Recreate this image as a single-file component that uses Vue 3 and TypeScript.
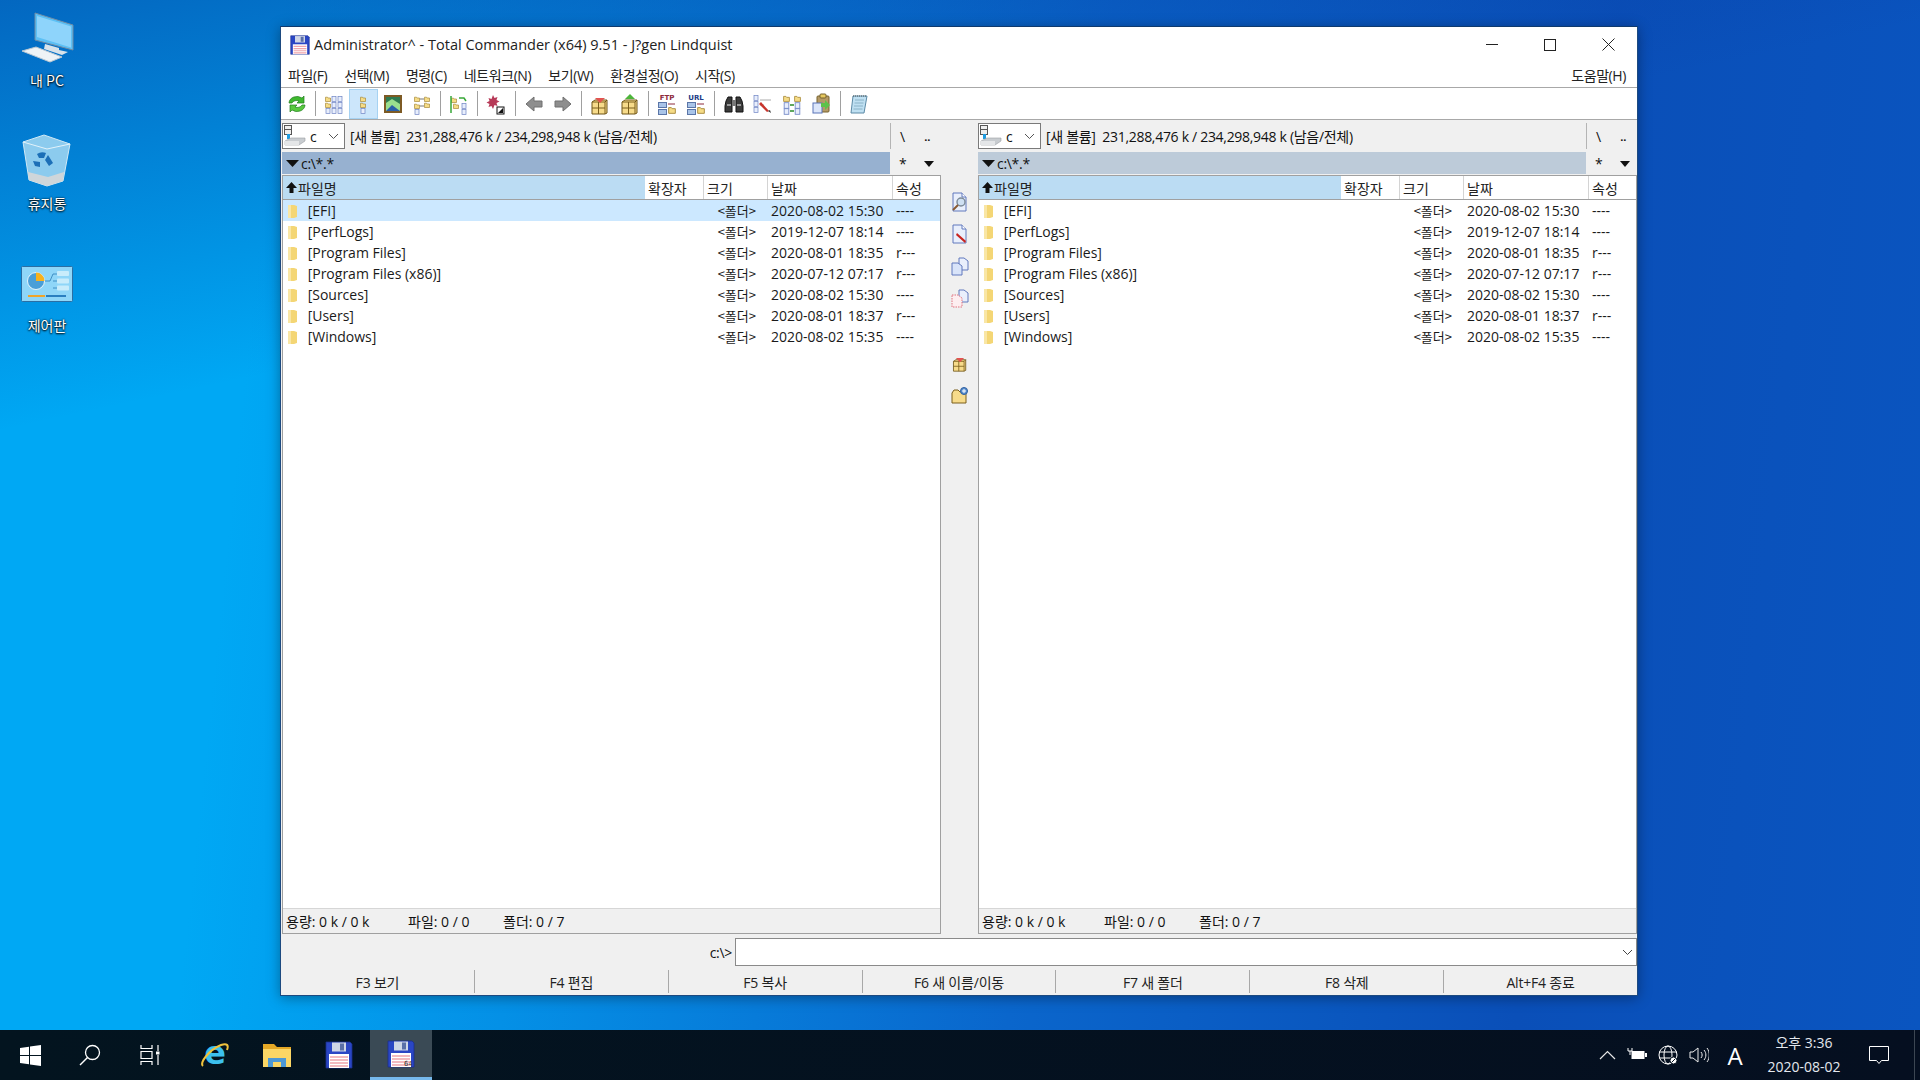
<template>
  <div class="screen">
    <!-- shared icon sprites -->
    <svg class="sprites" xmlns="http://www.w3.org/2000/svg">
      <defs>
        <symbol id="tf" viewBox="0 0 6 6"><path d="M.5 1.2h2l.6.8h2.4v3.5H.5z" fill="#f6dc86" stroke="#a8893a" stroke-width=".7"/></symbol>
        <symbol id="tb" viewBox="0 0 6 6"><rect x="1" y=".6" width="4" height="4.8" fill="#e8eefc" stroke="#6d83c4" stroke-width=".7"/></symbol>
        <symbol id="floppy" viewBox="0 0 28 28">
          <path d="M1 1h24l2 2v24H1z" fill="#2a46c4" stroke="#1b2f8c" stroke-width=".8"/>
          <rect x="7" y="1.5" width="14" height="9" fill="#cfd6e6"/><rect x="15" y="2.5" width="4" height="7" fill="#5a6fa8"/>
          <rect x="4" y="13" width="20" height="14" fill="#fff"/>
          <path d="M5 16h18M5 19h18M5 22h18M5 25h18" stroke="#f0a4ac" stroke-width="1.6"/>
        </symbol>
        <symbol id="box" viewBox="0 0 22 22">
          <path d="M3 8l3-2h12v13l-2 1H3z" fill="#f7db8a" stroke="#6e5418"/>
          <path d="M16 8v12M3 8h13M3 14h13M9.500 8v12" stroke="#7b5e1c" fill="none"/><path d="M16 8l2-2" stroke="#6e5418"/>
        </symbol>
        <symbol id="page" viewBox="0 0 18 20"><path d="M2 1h9l4 4v14H2z" fill="#e9effc" stroke="#6179bd"/><path d="M11 1v4h4" fill="#fff" stroke="#6179bd"/></symbol>
      </defs>
    </svg>

    <div class="desktop">
      <div class="desk-icons">
        <div class="desk-icon">
          <svg width="60" height="60" viewBox="17 8 60 60">
            <path d="M35 13l38 12v25L35 40z" fill="#5cc0f5" stroke="#6f8ca6"/>
            <path d="M37 16l34 10.500v21L37 37z" fill="#8ed4fb"/>
            <path d="M45 44l14 4v2l9 2-6 3-18-6z" fill="#d9e3ea"/>
            <path d="M22 51l14-4 26 10-12 5z" fill="#eef3f6" stroke="#b9c7d2"/>
          </svg>
          <span>내 PC</span>
        </div>
        <div class="desk-icon">
          <svg width="60" height="60" viewBox="17 130 60 60">
            <path d="M23 141l21-7 26 9-7 37-16 5-18-6z" fill="#a5d8f2" fill-opacity=".85" stroke="#cfe8f5"/>
            <path d="M23 141l24 7 23-5" fill="none" stroke="#e2f2fa"/>
            <path d="M28 171l20 5 16-5-1 9-16 5-18-6z" fill="#cfd6da"/>
            <path d="M37 153a9 9 0 0 1 9-1l-2 5h-5zm11 1l5 8-4 3-4-6zm-15 6l7 1v5l-5-1z" fill="#1c6fb7"/>
          </svg>
          <span>휴지통</span>
        </div>
        <div class="desk-icon">
          <svg width="60" height="60" viewBox="17 252 60 60">
            <rect x="21.500" y="265.500" width="51" height="35" rx="1" fill="#8fd6f8" stroke="#2b6ea3"/>
            <circle cx="36" cy="280" r="8.500" fill="#4a9fd8" stroke="#e6f4fb"/>
            <path d="M36 271.500a8.500 8.500 0 0 1 8.500 8.500H36z" fill="#f8b21d"/>
            <path d="M45 280h5l3-7h9M53 280h8M53 287h8" fill="none" stroke="#2c7fb8" stroke-width=".8"/>
            <rect x="57" y="270" width="12" height="5" rx="1" fill="#c8ecfb"/><rect x="57" y="277.500" width="12" height="5" rx="1" fill="#c8ecfb"/><rect x="57" y="284.500" width="12" height="5" rx="1" fill="#c8ecfb"/>
            <rect x="28" y="294" width="17" height="2" fill="#f0a52a"/><rect x="46" y="294" width="20" height="2" fill="#2a7fc0"/>
          </svg>
          <span>제어판</span>
        </div>
      </div>

      <div class="window">
        <div class="titlebar">
          <svg class="title-icon" width="20" height="20"><use href="#floppy"/></svg>
          <span class="title-text">Administrator^ - Total Commander (x64) 9.51 - J?gen Lindquist</span>
          <div class="win-btns">
            <div class="win-btn"><svg width="12" height="12"><path d="M0 5.500h12" stroke="#222"/></svg></div>
            <div class="win-btn"><svg width="12" height="12"><rect x=".5" y=".5" width="11" height="11" fill="none" stroke="#222"/></svg></div>
            <div class="win-btn"><svg width="13" height="13"><path d="M.5.5l12 12M12.500.5l-12 12" stroke="#222"/></svg></div>
          </div>
        </div>

        <div class="menubar">
          <span v-for="m in menus" :key="m">{{ m }}</span>
          <span class="menu-help">도움말(H)</span>
        </div>

        <div class="toolbar">
          <template v-for="(t, i) in tools" :key="i">
            <div v-if="t === 'sep'" class="tool-sep"></div>
            <div v-else class="tool" :class="{ on: t === 'tree' }">
              <svg width="22" height="22" viewBox="0 0 22 22">
                <template v-if="t === 'refresh'">
                  <path d="M3 10a8 7 0 0 1 13-5l2-2v7h-7l2-2a5 4 0 0 0-7 2z" fill="#3fb92f" stroke="#1f7d1c" stroke-width=".7"/>
                  <path d="M19 12a8 7 0 0 1-13 5l-2 2v-7h7l-2 2a5 4 0 0 0 7-2z" fill="#58c93f" stroke="#1f7d1c" stroke-width=".7"/>
                </template>
                <template v-else-if="t === 'brief'">
                  <use href="#tf" x="2" y="3" width="6" height="6"/><use href="#tf" x="2" y="9" width="6" height="6"/><use href="#tb" x="2" y="15" width="6" height="6"/>
                  <use href="#tb" x="8" y="3" width="6" height="6"/><use href="#tb" x="8" y="9" width="6" height="6"/><use href="#tb" x="8" y="15" width="6" height="6"/>
                  <use href="#tb" x="14" y="3" width="6" height="6"/><use href="#tb" x="14" y="9" width="6" height="6"/><use href="#tb" x="14" y="15" width="6" height="6"/>
                </template>
                <template v-else-if="t === 'tree'">
                  <use href="#tf" x="8" y="3" width="6" height="6"/><use href="#tf" x="8" y="9" width="6" height="6"/><use href="#tb" x="8" y="15" width="6" height="6"/>
                </template>
                <template v-else-if="t === 'thumb'">
                  <rect x="3" y="3" width="16" height="16" fill="#2f7a50" stroke="#7d5a24" stroke-width="2"/>
                  <path d="M4 10l6-4 8 5v7H4z" fill="#9adf8e"/><path d="M4 18l6-6 8 6z" fill="#2a5fa8"/>
                </template>
                <template v-else-if="t === 'treeview'">
                  <use href="#tf" x="3" y="3" width="6" height="6"/><use href="#tf" x="3" y="10" width="6" height="6"/><use href="#tb" x="3" y="16" width="6" height="6"/>
                  <use href="#tf" x="13" y="3" width="6" height="6"/><use href="#tf" x="13" y="9" width="6" height="6"/>
                  <path d="M9 6h4M9 13h4" stroke="#777"/>
                </template>
                <template v-else-if="t === 'compare'">
                  <use href="#tf" x="3" y="4" width="6" height="6"/><use href="#tf" x="5" y="10" width="6" height="6"/><use href="#tb" x="13" y="10" width="6" height="6"/><use href="#tb" x="13" y="16" width="6" height="6"/>
                  <path d="M3 3v17M11 5h5l2 3" fill="none" stroke="#38a838" stroke-width="1.500"/>
                </template>
                <template v-else-if="t === 'star'">
                  <path d="M8 2l1.500 3 3-1-1 3 3 1.500-3 1.500 1 3-3-1L8 16l-1.500-3-3 1 1-3-3-1.500 3-1.500-1-3 3 1z" fill="#b73a58"/>
                  <rect x="12" y="14" width="7" height="7" fill="#fff" stroke="#111"/><path d="M13 20l5-5v5z" fill="#111"/>
                </template>
                <template v-else-if="t === 'back'">
                  <path d="M3 11l8-7v4h8v6h-8v4z" fill="#8e8e8e" stroke="#707070"/>
                </template>
                <template v-else-if="t === 'fwd'">
                  <path d="M19 11l-8-7v4H3v6h8v4z" fill="#8e8e8e" stroke="#707070"/>
                </template>
                <template v-else-if="t === 'pack'">
                  <use href="#box" x="0" y="1" width="22" height="22"/><path d="M6 5h10l-5 5z" fill="#e2534f"/>
                </template>
                <template v-else-if="t === 'unpack'">
                  <use href="#box" x="0" y="1" width="22" height="22"/><path d="M11 1l5 5H6z" fill="#4db53a"/>
                </template>
                <template v-else-if="t === 'ftp' || t === 'url'">
                  <text x="11" y="7" text-anchor="middle" class="tool-label" :fill="t === 'ftp' ? '#8e2a3c' : '#1d3c86'">{{ t.toUpperCase() }}</text>
                  <rect x="2.500" y="9.500" width="8" height="5" fill="#a9c4e8" stroke="#5b76a8"/><rect x="2.500" y="16.500" width="8" height="5" fill="#a9c4e8" stroke="#5b76a8"/>
                  <use href="#tf" x="12" y="13" width="8" height="8"/>
                  <path d="M12 11h7" stroke="#8e2a3c"/>
                </template>
                <template v-else-if="t === 'find'">
                  <path d="M3 8l2-4h4v15H2v-6zM19 8l-2-4h-4v15h7v-6z" fill="#3a3a3a" stroke="#111"/>
                  <rect x="9" y="7" width="4" height="6" fill="#777"/><rect x="4" y="11" width="4" height="2" fill="#999"/><rect x="14" y="11" width="4" height="2" fill="#999"/>
                </template>
                <template v-else-if="t === 'rename'">
                  <use href="#tb" x="1" y="2" width="6" height="6"/><use href="#tb" x="1" y="8" width="6" height="6"/><use href="#tb" x="1" y="14" width="6" height="6"/>
                  <path d="M8 7h11M8 12h4" stroke="#aaa"/><path d="M9 9l8 9-2 1-8-8z" fill="#c8342c"/><path d="M16 18l3 2-1-3" fill="#333"/>
                </template>
                <template v-else-if="t === 'sync'">
                  <use href="#tf" x="2" y="2" width="7" height="7"/><use href="#tf" x="13" y="2" width="7" height="7"/>
                  <use href="#tb" x="2" y="9" width="7" height="7"/><use href="#tb" x="13" y="9" width="7" height="7"/>
                  <use href="#tb" x="2" y="15" width="7" height="7"/><use href="#tb" x="13" y="15" width="7" height="7"/>
                  <path d="M9 12h4M13 18H9" stroke="#2a8a2a" stroke-width="1.500"/>
                </template>
                <template v-else-if="t === 'clip'">
                  <rect x="7" y="3" width="12" height="16" rx="1" fill="#b59a66" stroke="#77622e"/><rect x="10" y="1" width="6" height="4" rx="1" fill="#e6c85e" stroke="#77622e"/>
                  <rect x="3" y="10" width="9" height="10" fill="#dce6fa" stroke="#5a74b8"/><path d="M11 10h4V7l5 5-5 5v-3h-4z" fill="#5cc24a"/>
                </template>
                <template v-else-if="t === 'note'">
                  <path d="M5 3h14l-3 17H3z" fill="#bfe0f2" stroke="#5c8aa6"/><path d="M7 7h9M6.500 10h9M6 13h9M5.500 16h9" stroke="#7fa7bd" stroke-width=".8"/><path d="M5 3h14" stroke="#555" stroke-dasharray="1 1"/>
                </template>
              </svg>
            </div>
          </template>
        </div>

        <div class="panels">
          <section v-for="(p, pi) in panels" :key="pi" class="panel" :class="{ 'panel-right': pi === 1 }">
            <div class="drive-row">
              <div class="combo">
                <svg width="24" height="24" viewBox="0 0 24 24">
                  <rect x="1.500" y="1.500" width="7" height="4" fill="#eee" stroke="#555"/><rect x="1.500" y="5.500" width="7" height="5" fill="#eee" stroke="#555"/>
                  <rect x="4" y="10" width="3" height="5" fill="#1d9be0"/>
                  <path d="M2 17l6-3h14v3l-6 4H2z" fill="#c8ccd0" stroke="#9a9ea2" stroke-width=".6"/><path d="M2 17h14v4H2z" fill="#e4e6e8"/>
                </svg>
                <span class="combo-letter">c</span>
                <svg class="combo-chev" width="11" height="7"><path d="M1 1l4.500 4.500L10 1" fill="none" stroke="#555"/></svg>
              </div>
              <span class="drive-info">[새 볼륨]&nbsp; 231,288,476 k / 234,298,948 k (남음/전체)</span>
              <div class="root-btns"><span>\</span><span class="dots">..</span></div>
            </div>
            <div class="path-row">
              <div class="path-bar">
                <svg width="14" height="7"><path d="M0 0h13L6.500 7z" fill="#111"/></svg>
                <span>c:\*.*</span>
              </div>
              <div class="path-btns">
                <span>*</span>
                <svg width="10" height="6"><path d="M0 0h10L5 6z" fill="#111"/></svg>
              </div>
            </div>
            <div class="file-box">
              <div class="list-head">
                <div class="hd hd-name"><svg width="11" height="11"><path d="M5.500 0L11 6H7.500v5h-4V6H0z" fill="#111"/></svg>파일명</div>
                <div class="hd">확장자</div>
                <div class="hd">크기</div>
                <div class="hd">날짜</div>
                <div class="hd hd-last">속성</div>
              </div>
              <div class="list">
                <div v-for="(r, ri) in rows" :key="r.name" class="row" :class="{ cursor: pi === 0 && ri === 0 }">
                  <div class="c-name">
                    <svg width="11" height="14" viewBox="0 0 11 14"><path d="M1 1h6l3 1v11l-3 1H1z" fill="#f4d675"/><path d="M1 1h3v13H1z" fill="#f9e6a5"/></svg>
                    [{{ r.name }}]
                  </div>
                  <div></div>
                  <div class="c-size">&lt;폴더&gt;</div>
                  <div class="c-date">{{ r.date }}</div>
                  <div class="c-attr">{{ r.attr }}</div>
                </div>
              </div>
              <div class="status">
                <span class="st-a">용량: 0 k / 0 k</span>
                <span class="st-b">파일: 0 / 0</span>
                <span>폴더: 0 / 7</span>
              </div>
            </div>
          </section>

          <aside class="middle">
            <div class="mid-btn">
              <svg width="18" height="20" viewBox="0 0 18 20"><use href="#page" width="18" height="20"/><circle cx="10" cy="10" r="4" fill="#cfe0f2" stroke="#7c8a98" stroke-width="1.400"/><path d="M7 13l-5 5" stroke="#8a5a32" stroke-width="2"/></svg>
            </div>
            <div class="mid-btn">
              <svg width="18" height="20" viewBox="0 0 18 20"><use href="#page" width="18" height="20"/><path d="M6 9l9 8-1 2-9-8z" fill="#c8241f"/></svg>
            </div>
            <div class="mid-btn">
              <svg width="18" height="20" viewBox="0 0 18 20"><path d="M8 2h5l4 3v9H8z" fill="#e9effc" stroke="#6179bd"/><path d="M1 7h6l4 3v9H1z" fill="#d9e4f9" stroke="#6179bd"/></svg>
            </div>
            <div class="mid-btn">
              <svg width="18" height="20" viewBox="0 0 18 20"><path d="M8 2h5l4 3v9H8z" fill="#e9effc" stroke="#6179bd"/><path d="M1 7h6l4 3v9H1z" fill="#fdeef0" stroke="#e0727f" stroke-dasharray="1.500 1"/></svg>
            </div>
            <div class="mid-btn mid-gap">
              <svg width="18" height="20" viewBox="0 0 22 22"><use href="#box" x="0" y="1" width="22" height="22"/><path d="M6 5h10l-5 5z" fill="#e2534f"/></svg>
            </div>
            <div class="mid-btn">
              <svg width="18" height="20" viewBox="0 0 18 20"><path d="M1 8l2-3h4l2 2h6v11H1z" fill="#f7db8a" stroke="#7b5e1c"/><circle cx="13" cy="6" r="3.500" fill="#5a8fd0" stroke="#2f5f9e"/><path d="M13 4v4M11 6h4" stroke="#fff"/></svg>
            </div>
          </aside>
        </div>

        <div class="cmd-row">
          <span class="cmd-label">c:\&gt;</span>
          <div class="cmd-input">
            <svg width="11" height="7"><path d="M1 1l4.500 4.500L10 1" fill="none" stroke="#444"/></svg>
          </div>
        </div>

        <div class="fkeys">
          <div v-for="k in fkeys" :key="k" class="fkey">{{ k }}</div>
        </div>
      </div>
    </div>

    <footer class="taskbar">
      <div class="tb-btn">
        <svg width="21" height="21" viewBox="0 0 21 21"><path d="M0 3l9-1.300V10H0zM10 1.500L21 0v10H10zM0 11h9v8.300L0 18zM10 11h11v10l-11-1.500z" fill="#fff"/></svg>
      </div>
      <div class="tb-btn">
        <svg width="22" height="22" viewBox="0 0 22 22"><circle cx="13.500" cy="8.500" r="7" fill="none" stroke="#fff" stroke-width="1.300"/><path d="M8.500 13.500L1 21" stroke="#fff" stroke-width="1.500"/></svg>
      </div>
      <div class="tb-btn">
        <svg width="20" height="20" viewBox="0 0 20 20" fill="none" stroke="#fff" stroke-width="1.200"><path d="M1 0v3.500h11V0M1 6.500h11v7H1zM1 20v-3.500h11V20M18 0v6M18 10v10"/><rect x="16" y="6.500" width="3.500" height="3" fill="#fff" stroke="none"/></svg>
      </div>
      <div class="tb-app">
        <svg width="30" height="30" viewBox="0 0 30 30">
          <text x="15" y="24" text-anchor="middle" class="ie-e">e</text>
          <path d="M3 26c-4-3 6-16 18-21 6-2 8 0 6 5" fill="none" stroke="#f0c23c" stroke-width="2"/>
        </svg>
      </div>
      <div class="tb-app">
        <svg width="28" height="26" viewBox="0 0 28 26">
          <path d="M0 2h11l3 3h14v20H0z" fill="#e5a826"/><rect x="0" y="7" width="28" height="18" fill="#fbd665"/>
          <path d="M5 25v-9h18v9h-5v-5h-8v5z" fill="#4d98d4"/>
        </svg>
      </div>
      <div class="tb-app">
        <svg width="28" height="28"><use href="#floppy"/></svg>
      </div>
      <div class="tb-app tb-active">
        <svg width="28" height="28" viewBox="0 0 28 28"><use href="#floppy" width="28" height="28"/><text x="17" y="26" class="floppy-64">64</text></svg>
      </div>

      <div class="tray">
        <svg class="tray-i" width="17" height="10" viewBox="0 0 17 10"><path d="M1 9l7.500-7.500L16 9" fill="none" stroke="#e8e8e8" stroke-width="1.200"/></svg>
        <svg class="tray-i" width="20" height="14" viewBox="0 0 20 14"><path d="M1 0v3h4V0M3 3v4" fill="none" stroke="#fff"/><rect x="4.500" y="3" width="13" height="8" fill="#fff"/><rect x="18" y="5" width="2" height="4" fill="#fff"/></svg>
        <svg class="tray-i" width="20" height="20" viewBox="0 0 20 20" fill="none" stroke="#fff"><circle cx="10" cy="10" r="9"/><ellipse cx="10" cy="10" rx="4" ry="9"/><path d="M1 7h18M1 13h18"/><circle cx="15.500" cy="15.500" r="3.500" fill="#fff" stroke="#06121f"/><path d="M13.500 17.500l4-4" stroke="#06121f"/></svg>
        <svg class="tray-i" width="20" height="16" viewBox="0 0 20 16" fill="none" stroke="#eee"><path d="M1 5h3l5-4v14l-5-4H1zM12 5c1.500 2 1.500 4 0 6M15 3c2.500 3 2.500 7 0 10M18 1c3 4 3 10 0 14"/></svg>
        <span class="ime">A</span>
        <div class="clock"><span>오후 3:36</span><span>2020-08-02</span></div>
        <svg class="notify" width="20" height="19" viewBox="0 0 20 19"><path d="M.5.500h19v14h-7l-2.500 3-2.500-3h-7z" fill="none" stroke="#fff"/></svg>
        <div class="show-desk"></div>
      </div>
    </footer>
  </div>
</template>

<script setup lang="ts">
interface FileRow {
  name: string
  date: string
  attr: string
}

const menus: string[] = ['파일(F)', '선택(M)', '명령(C)', '네트워크(N)', '보기(W)', '환경설정(O)', '시작(S)']

const tools: string[] = [
  'refresh', 'sep', 'brief', 'tree', 'thumb', 'treeview', 'sep', 'compare', 'sep', 'star', 'sep',
  'back', 'fwd', 'sep', 'pack', 'unpack', 'sep', 'ftp', 'url', 'sep',
  'find', 'rename', 'sync', 'clip', 'sep', 'note'
]

const rows: FileRow[] = [
  { name: 'EFI', date: '2020-08-02 15:30', attr: '----' },
  { name: 'PerfLogs', date: '2019-12-07 18:14', attr: '----' },
  { name: 'Program Files', date: '2020-08-01 18:35', attr: 'r---' },
  { name: 'Program Files (x86)', date: '2020-07-12 07:17', attr: 'r---' },
  { name: 'Sources', date: '2020-08-02 15:30', attr: '----' },
  { name: 'Users', date: '2020-08-01 18:37', attr: 'r---' },
  { name: 'Windows', date: '2020-08-02 15:35', attr: '----' }
]

const panels = [0, 1]

const fkeys: string[] = ['F3 보기', 'F4 편집', 'F5 복사', 'F6 새 이름/이동', 'F7 새 폴더', 'F8 삭제', 'Alt+F4 종료']
</script>

<style>
html,
body {
  margin: 0;
  padding: 0;
  overflow: hidden;
}
</style>

<style scoped>
.screen {
  width: 1920px;
  height: 1080px;
  display: flex;
  flex-direction: column;
  font-family: "Open Sans", "Noto Sans CJK KR", sans-serif;
  font-size: 14px;
  color: #111;
  overflow: hidden;
}
.sprites {
  width: 0;
  height: 0;
  display: block;
}

/* wallpaper */
.desktop {
  flex: 1;
  position: relative;
  background:
    linear-gradient(168deg, rgba(6, 50, 150, 0.55) 0%, rgba(6, 50, 150, 0) 30%),
    linear-gradient(96deg, #00a8f4 0%, #00a8f4 14%, #0490e6 30%, #0a66cc 55%, #0a4fb8 80%, #0a55c0 100%);
}
.desk-icons {
  display: flex;
  flex-direction: column;
  width: 94px;
  padding-top: 8px;
}
.desk-icon {
  height: 122.5px;
  display: flex;
  flex-direction: column;
  align-items: center;
  color: #fff;
  font-family: "Noto Sans CJK KR", sans-serif;
  font-size: 14px;
  line-height: 20px;
  text-shadow: 0 1px 2px #000, 0 0 2px #000;
}
.desk-icon svg {
  display: block;
}
.desk-icon span {
  margin-top: 2px;
}

/* window */
.window {
  position: absolute;
  left: 280px;
  top: 26px;
  width: 1358px;
  height: 970px;
  box-sizing: border-box;
  display: flex;
  flex-direction: column;
  background: #f0f0f0;
  border: 1px solid #1d4a80;
  border-top-color: #0f3a6e;
  box-shadow: 0 2px 12px rgba(0, 0, 0, 0.35);
}
.titlebar {
  height: 35px;
  flex: none;
  display: flex;
  align-items: center;
  background: #fff;
  padding-left: 9px;
}
.title-icon {
  flex: none;
}
.title-text {
  margin-left: 4px;
  font-size: 14.5px;
  color: #222;
}
.win-btns {
  margin-left: auto;
  display: flex;
}
.win-btn {
  width: 58px;
  height: 35px;
  display: flex;
  align-items: center;
  justify-content: center;
}
.menubar {
  height: 26px;
  flex: none;
  box-sizing: border-box;
  display: flex;
  align-items: center;
  gap: 17px;
  background: #fff;
  padding: 0 11px 0 7px;
  border-bottom: 1px solid #a8a8a8;
  font-family: "Open Sans", "Noto Sans CJK KR", sans-serif;
  font-size: 14px;
  letter-spacing: -0.4px;
  color: #222;
}
.menu-help {
  margin-left: auto;
}
.toolbar {
  height: 32px;
  flex: none;
  box-sizing: border-box;
  display: flex;
  align-items: center;
  padding-left: 1px;
  background: #fff;
  border-bottom: 1px solid #a8a8a8;
}
.tool {
  width: 29.3px;
  height: 30px;
  box-sizing: border-box;
  flex: none;
  display: flex;
  align-items: center;
  justify-content: center;
}
.tool.on {
  background: #cce6fb;
  border: 1px solid #a6d2f2;
}
.tool-sep {
  width: 8px;
  height: 25px;
  flex: none;
  background: linear-gradient(#a0a0a0, #a0a0a0) center / 1px 100% no-repeat;
}
.tool-label {
  font-family: "DejaVu Sans", sans-serif;
  font-size: 7px;
  font-weight: 700;
}

/* panels */
.panels {
  flex: 1;
  min-height: 0;
  display: flex;
  padding-left: 1px;
}
.panel {
  width: 659px;
  flex: none;
  display: flex;
  flex-direction: column;
}
.panel-right {
  order: 2;
}
.middle {
  order: 1;
  width: 37px;
  flex: none;
  display: flex;
  flex-direction: column;
  align-items: center;
  padding-top: 66px;
  box-sizing: border-box;
}
.mid-btn {
  height: 32px;
  display: flex;
  align-items: center;
  justify-content: center;
}
.mid-gap {
  margin-top: 33px;
}
.drive-row {
  height: 32px;
  flex: none;
  display: flex;
  align-items: center;
}
.combo {
  width: 63px;
  height: 26px;
  box-sizing: border-box;
  flex: none;
  display: flex;
  align-items: center;
  background: #fff;
  border: 1px solid #7a7a7a;
}
.combo-letter {
  margin-left: 3px;
  font-size: 14px;
}
.combo-chev {
  margin-left: auto;
  margin-right: 5px;
}
.drive-info {
  margin-left: 5px;
  font-family: "Open Sans", "Noto Sans CJK KR", sans-serif;
  font-size: 14px;
  letter-spacing: -0.3px;
  white-space: nowrap;
}
.root-btns {
  margin-left: auto;
  width: 51px;
  height: 26px;
  box-sizing: border-box;
  flex: none;
  display: flex;
  align-items: center;
  border-left: 1px solid #b4b4b4;
  padding-left: 9px;
  gap: 19px;
}
.dots {
  letter-spacing: 0;
  font-weight: 700;
  font-size: 11px;
}
.path-row {
  height: 23px;
  flex: none;
  display: flex;
}
.path-bar {
  flex: 1;
  height: 22px;
  display: flex;
  align-items: center;
  gap: 1px;
  padding-left: 4px;
  background: #97b1d0;
  font-size: 14px;
  letter-spacing: -0.3px;
}
.panel-right .path-bar {
  background: #bdcbd9;
}
.path-btns {
  width: 51px;
  flex: none;
  display: flex;
  align-items: center;
  padding-left: 9px;
  box-sizing: border-box;
  gap: 17px;
}
.file-box {
  flex: 1;
  min-height: 0;
  display: flex;
  flex-direction: column;
  box-sizing: border-box;
  border: 1px solid #a0a0a0;
  background: #fff;
}
.list-head,
.row {
  display: grid;
  grid-template-columns: 362px 59px 64px 125px 47px;
}
.list-head {
  height: 24px;
  flex: none;
  box-sizing: border-box;
  border-bottom: 1px solid #a0a0a0;
  font-family: "Noto Sans CJK KR", sans-serif;
  color: #222;
}
.hd {
  display: flex;
  align-items: center;
  padding-left: 3px;
  border-right: 1px solid #d4d4d4;
  white-space: nowrap;
  gap: 1px;
}
.hd-name {
  background: #bbdcf3;
  border-right: 0;
}
.hd-last {
  border-right: 0;
}
.list {
  flex: 1;
  min-height: 0;
}
.row {
  height: 21px;
  align-items: center;
  font-size: 14px;
  color: #1a1a1a;
}
.row.cursor {
  background: #cce8ff;
}
.c-name {
  display: flex;
  align-items: center;
  gap: 6px;
  padding-left: 4px;
  white-space: pre;
}
.c-size {
  text-align: right;
  padding-right: 12px;
  font-family: "Noto Sans CJK KR", sans-serif;
  font-size: 13px;
  white-space: nowrap;
}
.c-date {
  padding-left: 3px;
  white-space: nowrap;
}
.c-attr {
  padding-left: 3px;
}
.status {
  height: 25px;
  flex: none;
  box-sizing: border-box;
  display: flex;
  align-items: center;
  padding-left: 3px;
  background: #f0f0f0;
  border-top: 1px solid #d6d6d6;
  font-size: 14px;
}
.st-a {
  width: 122px;
}
.st-b {
  width: 95px;
}

/* command line */
.cmd-row {
  height: 36px;
  flex: none;
  display: flex;
  align-items: center;
  justify-content: flex-end;
}
.cmd-label {
  margin-right: 3px;
  font-size: 14px;
  letter-spacing: -0.3px;
}
.cmd-input {
  width: 902px;
  height: 28px;
  box-sizing: border-box;
  display: flex;
  align-items: center;
  justify-content: flex-end;
  padding-right: 3px;
  background: #fff;
  border: 1px solid #8a8a8a;
}
.fkeys {
  height: 23px;
  flex: none;
  display: flex;
  padding-bottom: 2px;
}
.fkey {
  flex: 1;
  display: flex;
  align-items: center;
  justify-content: center;
  border-right: 1px solid #a8a8a8;
  font-size: 14px;
  letter-spacing: -0.2px;
  color: #222;
}
.fkey:last-child {
  border-right: 0;
}

/* taskbar */
.taskbar {
  height: 50px;
  flex: none;
  display: flex;
  align-items: stretch;
  background: linear-gradient(90deg, #03141f, #050f20);
  color: #e4e8ee;
  font-family: "Open Sans", "Noto Sans CJK KR", sans-serif;
}
.tb-btn {
  width: 60px;
  flex: none;
  display: flex;
  align-items: center;
  justify-content: center;
}
.tb-app {
  width: 62px;
  flex: none;
  box-sizing: border-box;
  display: flex;
  align-items: center;
  justify-content: center;
}
.tb-btn + .tb-app {
  margin-left: 4px;
}
.tb-active {
  background: #3a4a55;
  border-bottom: 3px solid #76b9ed;
}
.floppy-64 {
  font-family: "DejaVu Sans Mono", monospace;
  font-size: 7px;
  fill: #333;
}
.ie-e {
  font-family: "DejaVu Sans", sans-serif;
  font-size: 32px;
  font-weight: 700;
  fill: #3cc0ee;
}
.tray {
  margin-left: auto;
  display: flex;
  align-items: center;
}
.tray-i {
  flex: none;
  margin-right: 11px;
}
.ime {
  font-size: 24px;
  width: 26px;
  text-align: center;
  color: #fff;
  margin-left: 2px;
}
.clock {
  width: 90px;
  margin-left: 11px;
  display: flex;
  flex-direction: column;
  align-items: center;
  font-size: 14px;
  line-height: 24px;
}
.notify {
  margin: 0 25px 0 20px;
}
.show-desk {
  width: 1px;
  height: 100%;
  background: #3c4652;
  margin-right: 5px;
}
</style>
